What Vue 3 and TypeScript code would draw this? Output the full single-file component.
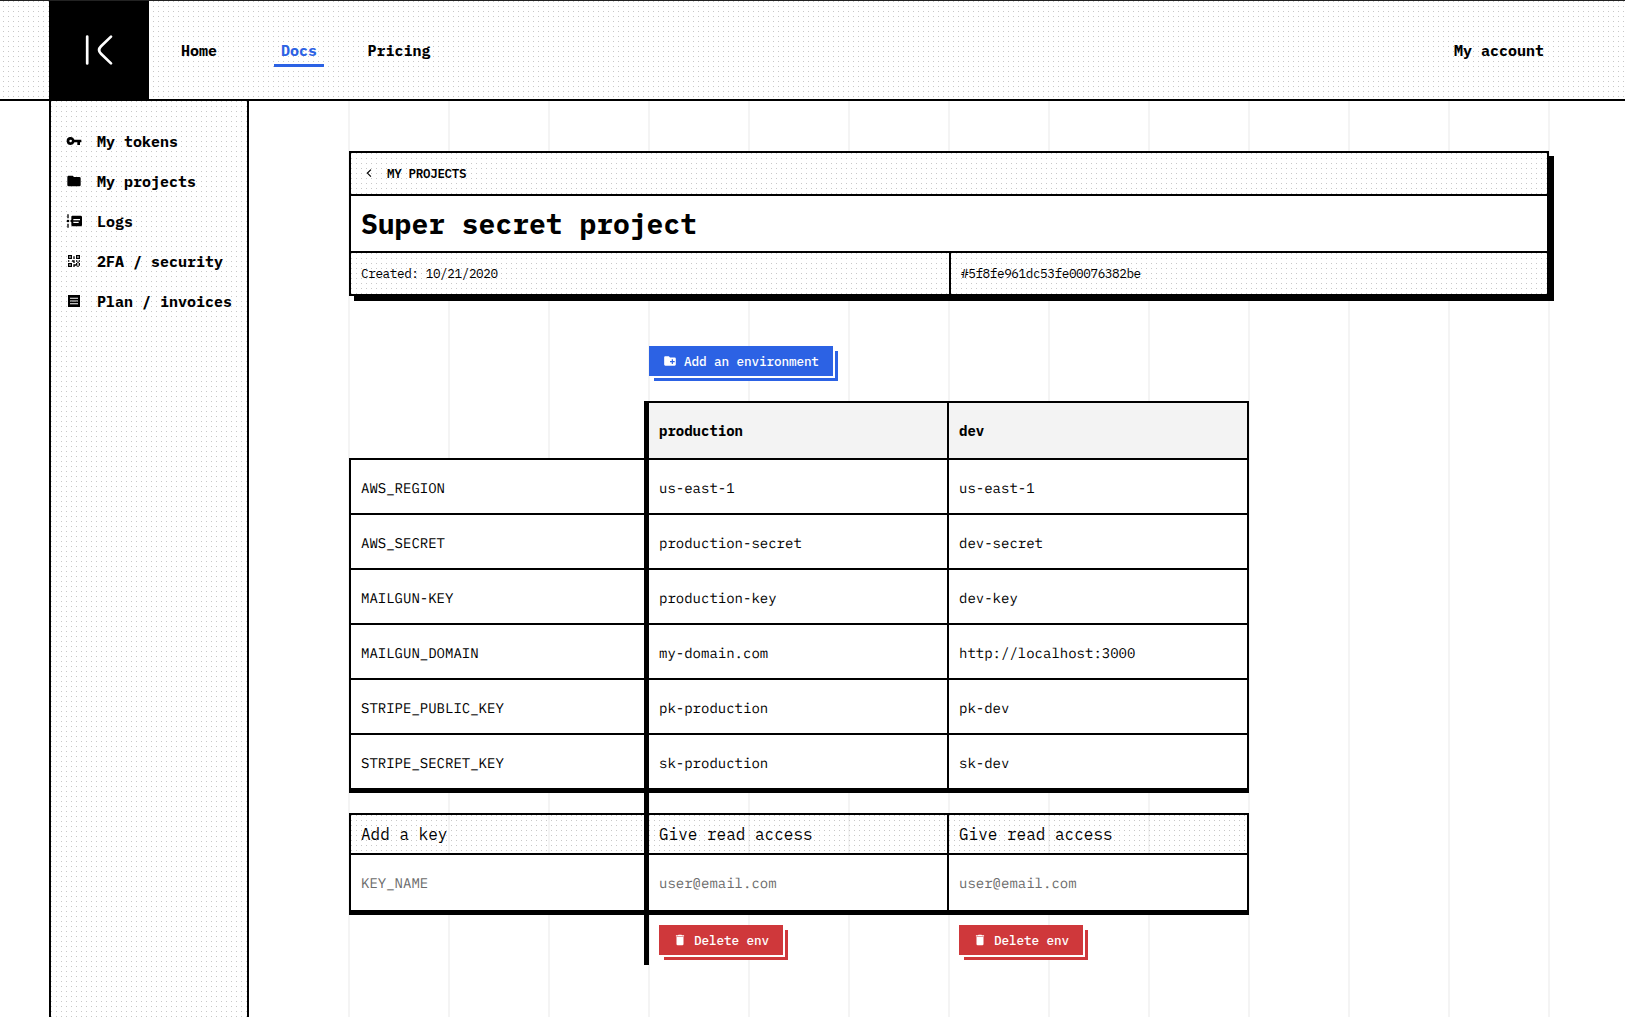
<script setup lang="ts">
interface NavItem {
  label: string
  active?: boolean
}
interface SideItem {
  label: string
  icon: string
}
interface Row {
  key: string
  values: string[]
}

const nav: NavItem[] = [{ label: 'Home' }, { label: 'Docs', active: true }, { label: 'Pricing' }]

const side: SideItem[] = [
  {
    label: 'My tokens',
    icon: 'M7 14a2 2 0 1 1 0-4 2 2 0 0 1 0 4m5.65-4A6 6 0 1 0 7 18a6 6 0 0 0 5.65-4H17v4h4v-4h2v-4z',
  },
  {
    label: 'My projects',
    icon: 'M10 4H4c-1.1 0-2 .9-2 2v12a2 2 0 0 0 2 2h16a2 2 0 0 0 2-2V8a2 2 0 0 0-2-2h-8z',
  },
  {
    label: 'Logs',
    icon: 'M4 2v6H2V2h2M2 22h2v-6H2v6m3-10a2 2 0 1 1-4 0 2 2 0 0 1 4 0m19-6v12a2 2 0 0 1-2 2H10a2 2 0 0 1-2-2v-4l-2-2 2-2V6c0-1.1.9-2 2-2h12a2 2 0 0 1 2 2m-5 7h-8v2h8v-2m2-4H11v2h10V9z',
  },
  {
    label: '2FA / security',
    icon: 'M3 11h2v2H3v-2m8-6h2v4h-2V5m-2 6h4v4h-2v-2H9v-2m6 0h2v2h2v-2h2v2h-2v2h2v4h-2v2h-2v-2h-4v2h-2v-4h4v-2h2v-2h-2v-2m4 8v-4h-2v4h2M15 3h6v6h-6V3m2 2v2h2V5h-2M3 3h6v6H3V3m2 2v2h2V5H5M3 15h6v6H3v-6m2 2v2h2v-2H5z',
  },
  {
    label: 'Plan / invoices',
    icon: 'M3 3h18v18H3V3m3 4v1.7h12V7H6m0 4.2v1.7h12v-1.7H6m0 4.1V17h12v-1.7H6z',
  },
]

const environments: string[] = ['production', 'dev']

const rows: Row[] = [
  { key: 'AWS_REGION', values: ['us-east-1', 'us-east-1'] },
  { key: 'AWS_SECRET', values: ['production-secret', 'dev-secret'] },
  { key: 'MAILGUN-KEY', values: ['production-key', 'dev-key'] },
  { key: 'MAILGUN_DOMAIN', values: ['my-domain.com', 'http://localhost:3000'] },
  { key: 'STRIPE_PUBLIC_KEY', values: ['pk-production', 'pk-dev'] },
  { key: 'STRIPE_SECRET_KEY', values: ['sk-production', 'sk-dev'] },
]
</script>

<template>
  <div class="page">
    <header class="topbar dots">
      <a class="logo">
        <svg width="100" height="100" viewBox="0 0 100 100" fill="none" stroke="#fff" stroke-width="2.7" stroke-linecap="round">
          <path d="M38.2 35.6V62.4M62 35.6L52 45.2Q48.2 49 52 52.8L62 62.4" />
        </svg>
      </a>
      <nav class="nav">
        <a v-for="item in nav" :key="item.label" class="nav-item">
          <span :class="{ active: item.active }">{{ item.label }}</span>
        </a>
      </nav>
      <a class="nav-item account"><span>My account</span></a>
    </header>

    <div class="body">
      <aside class="sidebar dots">
        <a v-for="item in side" :key="item.label" class="side-item">
          <svg width="16" height="16" viewBox="0 0 24 24"><path fill-rule="evenodd" :d="item.icon" /></svg>
          <span>{{ item.label }}</span>
        </a>
      </aside>

      <main class="content">
        <section class="project">
          <a class="crumb dots">
            <svg width="16" height="16" viewBox="0 0 16 16" fill="none" stroke="#000" stroke-width="1.2">
              <path d="M9.9 4.6L6.4 8.1L9.9 11.6" />
            </svg>
            <span>MY PROJECTS</span>
          </a>
          <h1>Super secret project</h1>
          <div class="meta">
            <span class="dots">Created: 10/21/2020</span>
            <span class="dots">#5f8fe961dc53fe00076382be</span>
          </div>
        </section>

        <button class="btn blue">
          <svg width="14" height="14" viewBox="0 0 24 24" fill="#fff">
            <path fill-rule="evenodd" d="M10 4H4c-1.1 0-2 .9-2 2v12a2 2 0 0 0 2 2h16a2 2 0 0 0 2-2V8a2 2 0 0 0-2-2h-8zM15 9h2v3h3v2h-3v3h-2v-3h-3v-2h3z" />
          </svg>
          <span>Add an environment</span>
        </button>

        <div class="matrix">
          <div class="line head">
            <div class="cell blank"></div>
            <div v-for="env in environments" :key="env" class="cell">{{ env }}</div>
          </div>
          <div class="rows">
            <div v-for="row in rows" :key="row.key" class="line">
              <div class="cell first">{{ row.key }}</div>
              <div v-for="(value, i) in row.values" :key="i" class="cell">{{ value }}</div>
            </div>
          </div>
          <div class="line spacer"><div class="cell blank"></div></div>
          <div class="line access">
            <div class="cell first dots">Add a key</div>
            <div v-for="env in environments" :key="env" class="cell dots">Give read access</div>
          </div>
          <div class="line inputs">
            <div class="cell first">KEY_NAME</div>
            <div v-for="env in environments" :key="env" class="cell">user@email.com</div>
          </div>
          <div class="line actions">
            <div class="cell blank"></div>
            <div v-for="env in environments" :key="env" class="cell">
              <button class="btn red">
                <svg width="14" height="14" viewBox="0 0 24 24" fill="#fff">
                  <path d="M19 4h-3.500l-1-1h-5l-1 1H5v2h14M6 19a2 2 0 0 0 2 2h8a2 2 0 0 0 2-2V7H6z" />
                </svg>
                <span>Delete env</span>
              </button>
            </div>
          </div>
        </div>
      </main>
    </div>
  </div>
</template>

<style>
body {
  margin: 0;
  background: #fff;
}
</style>

<style scoped>
.page {
  display: flex;
  flex-direction: column;
  height: 1017px;
  overflow: hidden;
  box-sizing: border-box;
  border-top: 1px solid #222;
  color: #000;
  font-family: 'IBM Plex Mono', 'Liberation Mono', monospace;
  font-size: 14px;
}
.page * {
  box-sizing: border-box;
}
.dots {
  background-image: conic-gradient(from 0deg at 1px 1px, transparent 270deg, #c8c8c8 0);
  background-size: 5px 5px;
}
.topbar {
  display: flex;
  flex: none;
  height: 100px;
  padding: 0 76px 0 49px;
  border-bottom: 2px solid #000;
  background-position: 3px 0;
}
.logo {
  width: 100px;
  height: 100px;
  background: #000;
}
.logo svg {
  display: block;
}
.nav {
  display: flex;
}
.nav-item {
  display: flex;
  justify-content: center;
  width: 100px;
  padding-top: 40px;
  font-size: 15px;
  font-weight: 700;
  line-height: 20px;
  white-space: nowrap;
}
.nav-item span {
  height: 26px;
}
.nav-item .active {
  padding: 0 7px;
  color: #2c62e4;
  border-bottom: 3px solid #2c62e4;
}
.account {
  margin-left: auto;
}
.body {
  display: flex;
  flex: 1;
  padding-left: 49px;
}
.sidebar {
  width: 200px;
  padding: 20px 0 0 15px;
  border: solid #000;
  border-width: 0 2px;
}
.side-item {
  display: flex;
  align-items: center;
  gap: 15px;
  height: 40px;
  font-size: 15px;
  font-weight: 700;
  white-space: nowrap;
}
.content {
  flex: 1;
  display: flex;
  flex-direction: column;
  align-items: flex-start;
  padding: 50px 76px 0 100px;
  background: repeating-linear-gradient(90deg, #f4f4f4 0 2px, transparent 2px 100px) 99px 0 / 1202px 100% no-repeat;
}
.project {
  width: 1200px;
  height: 145px;
  border: 2px solid #000;
  background: #fff;
  box-shadow: 5px 5px 0 #000;
}
.crumb {
  display: flex;
  align-items: center;
  gap: 10px;
  height: 41px;
  padding: 0 0 1px 10px;
  font-size: 12.5px;
  letter-spacing: -0.3px;
  font-weight: 600;
}
h1 {
  height: 59px;
  margin: 0;
  padding-left: 10px;
  border: solid #000;
  border-width: 2px 0;
  font-size: 28px;
  line-height: 55px;
}
.meta {
  display: grid;
  grid-template-columns: 598px 598px;
  height: 41px;
  font-size: 12.7px;
  letter-spacing: -0.42px;
  line-height: 41px;
}
.meta span {
  padding-left: 10px;
}
.meta span + span {
  border-left: 2px solid #000;
}
.btn {
  display: flex;
  align-items: center;
  gap: 7px;
  height: 30px;
  padding: 0 14px;
  border: 0;
  color: #fff;
  font: 500 12.7px 'IBM Plex Mono', 'Liberation Mono', monospace;
  letter-spacing: -0.12px;
  white-space: nowrap;
}
.blue {
  margin: 50px 0 25px 300px;
  background: #2c62e4;
  box-shadow: 2px 2px 0 #fff, 5px 5px 0 #2c62e4;
}
.red {
  background: #cf383b;
  box-shadow: 2px 2px 0 #fff, 5px 5px 0 #cf383b;
}
.matrix {
  width: 900px;
}
.line {
  display: grid;
  grid-template-columns: 300px 300px 300px;
}
.cell {
  display: flex;
  align-items: center;
  height: 55px;
  padding: 2px 0 0 10px;
  border-top: 2px solid #000;
  border-right: 2px solid #000;
  background-color: #fff;
  white-space: nowrap;
}
.cell:first-child {
  border-right: 5px solid #000;
}
.first {
  border-left: 2px solid #000;
}
.head .cell {
  height: 57px;
  padding-top: 0;
  background-color: #f3f3f3;
  font-weight: 700;
}
.line .cell.blank {
  border-top: 0;
  background: none;
}
.rows {
  border-bottom: 5px solid #000;
}
.rows,
.inputs {
  text-rendering: geometricPrecision;
}
.spacer .cell {
  height: 20px;
}
.access .cell {
  height: 40px;
  padding-top: 0;
  background-color: transparent;
  font-size: 16px;
}
.inputs {
  border-bottom: 5px solid #000;
}
.inputs .cell {
  height: 57px;
  padding-top: 1px;
  color: #6c6c6c;
}
.actions .cell {
  height: 50px;
  padding-top: 10px;
  align-items: flex-start;
  border-top: 0;
  background: none;
}
.actions .cell:not(:first-child) {
  border-right: 0;
}
</style>
